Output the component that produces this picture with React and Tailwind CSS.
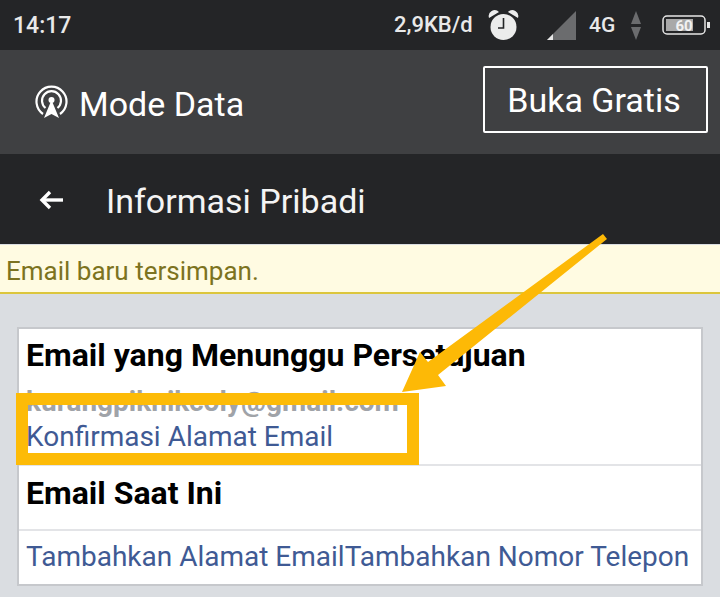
export default function App() {
  return (
    <div className="relative w-[720px] h-[597px] overflow-hidden bg-[#dadde1] font-['Roboto',sans-serif]">
      {/* status bar */}
      <div className="h-[50px] bg-[#242527] flex items-center pl-[13px] text-[#e9e9e9] font-medium">
        <span className="text-[23px] leading-none w-[381px]">14:17</span>
        <span className="text-[22px] leading-none w-[94px]">2,9KB/d</span>
        <svg width="31" height="32" viewBox="0 0 31 32" className="mr-[27px] -mt-[1px]">
          <circle cx="15.5" cy="18" r="13" fill="#ececec" />
          <path d="M1 9 a6 6 0 0 1 10-6 z M30 9 a6 6 0 0 0-10-6 z" fill="#ececec" />
          <path d="M15.5 9 V19 H10" stroke="#242527" strokeWidth="1.6" fill="none" />
        </svg>
        <svg width="31" height="31" viewBox="0 0 31 31" className="mr-[12px]">
          <polygon points="1,30 30,1 30,30" fill="#6b6c6e" />
          <polygon points="1,30 7,24 7,30" fill="#e6e6e6" />
        </svg>
        <span className="text-[21px] leading-none w-[42px]">4G</span>
        <svg width="10" height="31" viewBox="0 0 10 31" className="mr-[21px]">
          <polygon points="5,1 10,14 0,14" fill="#6b6c6e" />
          <polygon points="0,17 10,17 5,30" fill="#6b6c6e" />
        </svg>
        <svg width="49" height="20" viewBox="0 0 49 20">
          <rect x="1" y="1" width="42" height="18" rx="4" fill="none" stroke="#e6e6e6" strokeWidth="1.5" />
          <rect x="4" y="4" width="27" height="12" fill="#a9a9a9" />
          <rect x="45" y="7" width="3" height="6" fill="#e6e6e6" />
          <text x="22" y="15.5" textAnchor="middle" fontSize="15" fontWeight="700" fill="#f2f2f2">60</text>
        </svg>
      </div>

      {/* mode data bar */}
      <div className="h-[104px] bg-[#3f4042] flex items-center pl-[35px] pr-[12px] text-white">
        <svg width="33" height="34" viewBox="0 0 33 34" className="mr-[11px]" fill="none" stroke="#fff" strokeWidth="2.2">
          <path d="M8 29 A15 15 0 1 1 25 29" />
          <path d="M10.5 23 A9.5 9.5 0 1 1 22.5 23" />
          <circle cx="16.5" cy="15" r="3" fill="#fff" stroke="none" />
          <polygon points="16.5,15 24,33 16.5,29 9,33" fill="#fff" stroke="none" />
        </svg>
        <span className="text-[34px] leading-none pt-[3px]">Mode Data</span>
        <button className="ml-auto -mt-[5px] w-[225px] h-[67px] pr-[3px] pt-[1px] border-2 border-white rounded-[2px] text-[34px] leading-none text-white">
          Buka Gratis
        </button>
      </div>

      {/* nav bar */}
      <div className="h-[90px] bg-[#242527] flex items-center pl-[39px] text-[#f4f4f4]">
        <svg width="25" height="20" viewBox="0 0 25 20" className="mr-[42px] mt-[2px]" fill="none" stroke="#fff" strokeWidth="3.4">
          <path d="M24 10 H3" />
          <path d="M11 2 L3 10 L11 18" />
        </svg>
        <span className="text-[34px] leading-none pt-[3px]">Informasi Pribadi</span>
      </div>

      {/* saved banner */}
      <div className="h-[49px] mt-px pt-[4px] bg-[#fffbe2] border-b-2 border-[#dcc63c] flex items-center pl-[6px] text-[26px] leading-none text-[#7c7320]">
        Email baru tersimpan.
      </div>

      {/* card */}
      <div className="mt-[33px] mx-[17px] h-[259px] bg-white border-2 border-[#c6c8cc] flex flex-col">
        <div className="h-[137px] pl-[7px] pt-[8px] border-b-2 border-[#e3e4e7] flex flex-col">
          <h2 className="text-[32px] leading-[36px] font-bold text-black">Email yang Menunggu Persetujuan</h2>
          <div className="mt-[12px] text-[28px] leading-[34px] font-bold text-[#a0a3a8]">kurangpiknikcoly@gmail.com</div>
          <a className="text-[28px] leading-[36px] text-[#3f5a94]">Konfirmasi Alamat Email</a>
        </div>
        <div className="h-[65px] pl-[7px] pt-[9px] border-b-2 border-[#e3e4e7]">
          <h2 className="text-[32px] leading-[36px] font-bold text-black">Email Saat Ini</h2>
        </div>
        <div className="flex-1 pl-[7px] pb-[1px] flex items-center text-[28px] leading-none text-[#3f5a94]">
          <a>Tambahkan Alamat Email</a>
          <a>Tambahkan Nomor Telepon</a>
        </div>
      </div>

      {/* annotation drawn on top of the screenshot */}
      <div className="absolute left-[16px] top-[393px] w-[403px] h-[72px] border-[12px] border-[#fdbb07]" />
      <svg className="absolute left-0 top-0" width="720" height="597" viewBox="0 0 720 597">
        <polygon points="603,234 607,239 438,375 446,386 402,392 420,352 428,362" fill="#fdb906" />
      </svg>
    </div>
  );
}
